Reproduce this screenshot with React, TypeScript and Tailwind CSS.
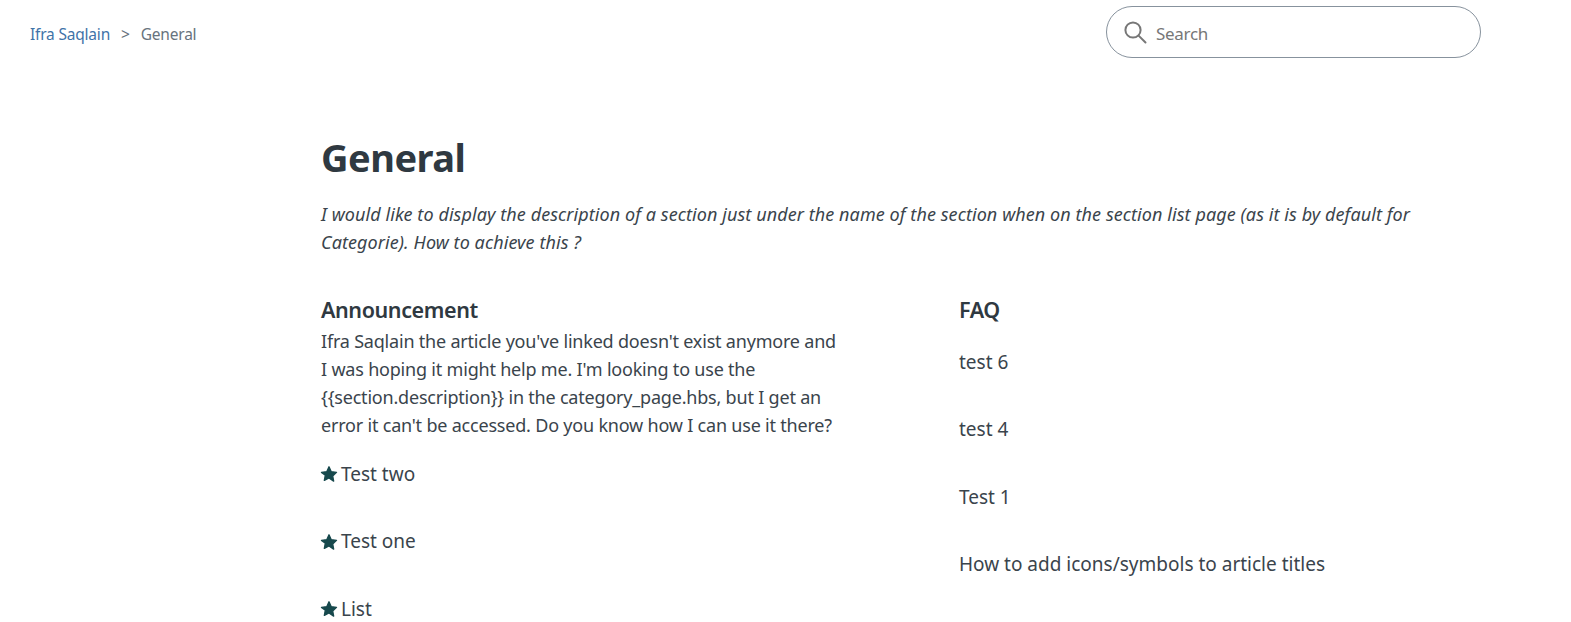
import React from "react";

const font = { fontFamily: '"Noto Sans", sans-serif' };

function Star() {
  return (
    <svg viewBox="0 0 24 24" className="w-[18px] h-[18px] ml-[-1px] mr-[3px] shrink-0 fill-[#17494d] stroke-[#17494d] stroke-[1.8]" strokeLinejoin="round" aria-hidden="true">
      <path d="M12 2.4l3 6.5 7 .9-5.1 4.8 1.3 6.9L12 17.2l-6.2 3.3 1.3-6.9L2 9.8l7-.9z" />
    </svg>
  );
}

function Item({ label, star }: { label: string; star?: boolean }) {
  return (
    <div className="h-[67.5px] flex items-start">
      <div className="flex items-center h-[28px] text-[19px] text-[#3a444c]">
        {star && <Star />}
        <span>{label}</span>
      </div>
    </div>
  );
}

export default function App() {
  return (
    <div className="h-[622px] overflow-hidden bg-white" style={font}>
      <header className="flex items-start justify-between pl-[30px] pr-[90px] pt-[6px]">
        <nav className="flex items-center h-[57px] text-[15.5px] tracking-[-0.2px]">
          <span className="text-[#3f73a8]">Ifra Saqlain</span>
          <span className="mx-[11px] text-[#68737d]">&gt;</span>
          <span className="text-[#68737d]">General</span>
        </nav>
        <div className="flex items-center w-[375px] h-[52px] rounded-[26px] border border-[#87929d] pl-[16px]">
          <svg viewBox="0 0 24 24" className="w-[24px] h-[24px] fill-none stroke-[#777] stroke-[2]" aria-hidden="true">
            <circle cx="10" cy="10" r="7.6" />
            <path d="M15.6 15.6 L22.5 22.5" strokeLinecap="round" />
          </svg>
          <span className="ml-[9px] mt-[3px] text-[17px] text-[#777] tracking-[-0.3px]">Search</span>
        </div>
      </header>

      <main className="pl-[321px] pr-[130px] pt-[69px]">
        <h1 className="text-[38px] leading-[50px] font-bold text-[#2f3941] tracking-[-0.5px]">General</h1>
        <p className="mt-[18px] text-[18px] leading-[28px] italic text-[#3a444c] tracking-[0.08px]">
          I would like to display the description of a section just under the name of the section when on the section list page (as it is by default for Categorie). How to achieve this ?
        </p>
        <div className="mt-[38px] grid grid-cols-[638px_1fr]">
          <section>
            <h2 className="text-[21.5px] leading-[32px] mb-[1px] font-semibold text-[#2f3941] tracking-[-0.4px]">Announcement</h2>
            <p className="w-[520px] text-[18px] leading-[28px] text-[#3a444c] tracking-[-0.2px]">
              Ifra Saqlain the article you've linked doesn't exist anymore and I was hoping it might help me. I'm looking to use the {"{{section.description}}"} in the category_page.hbs, but I get an error it can't be accessed. Do you know how I can use it there?
            </p>
            <div className="mt-[21px]">
              <Item star label="Test two" />
              <Item star label="Test one" />
              <Item star label="List" />
            </div>
          </section>
          <section>
            <h2 className="text-[21.5px] leading-[32px] mb-[1px] font-semibold text-[#2f3941] tracking-[-0.4px]">FAQ</h2>
            <div className="mt-[22px]">
              <Item label="test 6" />
              <Item label="test 4" />
              <Item label="Test 1" />
              <Item label="How to add icons/symbols to article titles" />
            </div>
          </section>
        </div>
      </main>
    </div>
  );
}
